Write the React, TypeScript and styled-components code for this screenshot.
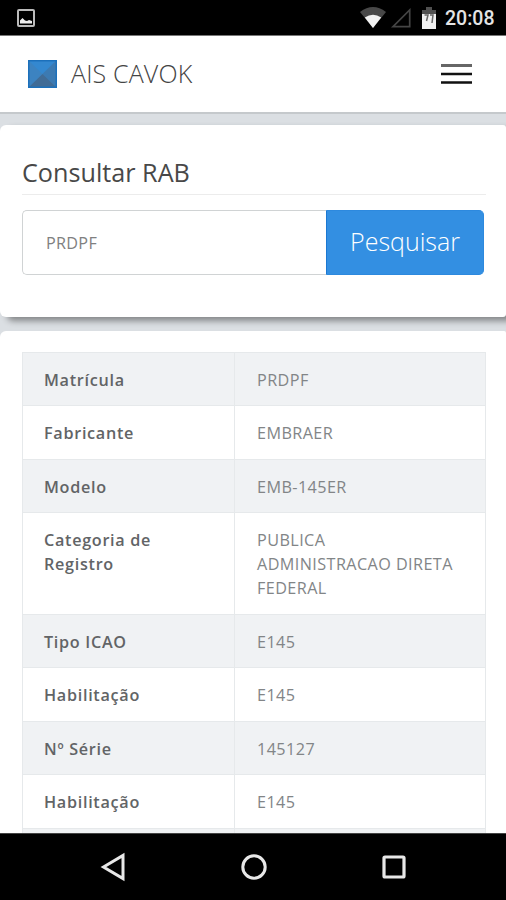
import React from "react";
import styled, { createGlobalStyle } from "styled-components";

const GlobalStyle = createGlobalStyle`
  * { box-sizing: border-box; }
  body {
    margin: 0;
    background: #dbdfe3;
    font-family: "Open Sans", "Noto Sans", sans-serif;
    overflow: hidden;
  }
`;

const Screen = styled.div`
  width: 506px;
  height: 900px;
  display: flex;
  flex-direction: column;
  background: #dbdfe3;
  overflow: hidden;
`;

const StatusBar = styled.header`
  flex: none;
  height: 35px;
  display: flex;
  align-items: center;
  justify-content: space-between;
  padding: 0 11px 0 17px;
  background: #000;
`;

const StatusIcons = styled.div`
  display: flex;
  align-items: center;
  svg { display: block; }
`;

const Clock = styled.span`
  width: 50px;
  margin-left: 9px;
  padding-top: 3px;
  color: #e4e4e4;
  font: 500 19.5px/24px Roboto, sans-serif;
  white-space: nowrap;
`;

const TopBar = styled.div`
  flex: none;
  height: 79px;
  display: flex;
  align-items: center;
  padding: 0 34px 1px 28px;
  background: #fff;
  border-top: 1px solid #777;
  border-bottom: 2px solid #c5c9cc;
`;

const BrandName = styled.h1`
  flex: 1;
  margin: -2px 0 0 14px;
  font-size: 25px;
  line-height: 34px;
  font-weight: 300;
  letter-spacing: 0.15px;
  color: #444;
`;

const MenuButton = styled.button`
  width: 31px;
  height: 22px;
  padding: 0;
  border: 0;
  background: none;
  svg { display: block; }
`;

const Content = styled.main`
  flex: 1;
  min-height: 0;
  display: flex;
  flex-direction: column;
  gap: 14px;
  padding-top: 11px;
  overflow: hidden;
`;

const SearchCard = styled.section`
  flex: none;
  height: 192px;
  padding: 29px 20px 0 22px;
  background: #fff;
  border-radius: 6px 3px 3px 6px;
  box-shadow: 7px 4px 6px #858789;
`;

const CardTitle = styled.h2`
  margin: 0;
  height: 41px;
  font-size: 25.2px;
  line-height: 36px;
  font-weight: 400;
  color: #484848;
  border-bottom: 1px solid #ececec;
`;

const SearchForm = styled.form`
  display: flex;
  height: 65px;
  margin-top: 15px;
  padding-right: 2px;
`;

const SearchInput = styled.input`
  flex: 1;
  min-width: 0;
  padding: 0 23px;
  border: 1px solid #d0d3d4;
  border-right: 0;
  border-radius: 5px 0 0 5px;
  outline: 0;
  background: #fff;
  color: #808080;
  font: 400 16.2px "Open Sans", sans-serif;
  letter-spacing: 0.3px;
`;

const SearchButton = styled.button`
  width: 158px;
  padding: 0 0 3px;
  border: 1px solid #2d89de;
  border-left-color: #1c78d2;
  border-radius: 0 5px 5px 0;
  background: #338fe2;
  color: #fff;
  font: 300 25px "Open Sans", sans-serif;
`;

const ResultCard = styled.section`
  flex: 1;
  min-height: 0;
  padding: 21px 20px 0 22px;
  background: #fff;
  border-radius: 6px 2px 0 0;
  overflow: hidden;
`;

const DataTable = styled.table`
  width: 464px;
  border-collapse: collapse;
  table-layout: fixed;
  font-size: 16.2px;
  line-height: 24.2px;
`;

const Row = styled.tr<{ $striped: boolean; $height: number }>`
  height: ${(p) => p.$height}px;
  background: ${(p) => (p.$striped ? "#f0f2f4" : "#fff")};
`;

const Label = styled.th`
  width: 212px;
  padding: 14.5px 22px 12px 21px;
  border: 1px solid #e6e9eb;
  text-align: left;
  vertical-align: top;
  font-weight: 600;
  letter-spacing: 0.7px;
  color: #626466;
`;

const Value = styled.td`
  padding: 14.5px 22px 12px 22px;
  border: 1px solid #e6e9eb;
  vertical-align: top;
  letter-spacing: 0.42px;
  white-space: pre-line;
  color: #828587;
`;

const NavBar = styled.nav`
  flex: none;
  height: 67px;
  display: flex;
  justify-content: center;
  align-items: center;
  gap: 112px;
  padding-left: 1px;
  background: #000;
  border-top: 1px solid #444;
  svg { display: block; }
`;

const rows = [
  { label: "Matrícula", value: "PRDPF", height: 53 },
  { label: "Fabricante", value: "EMBRAER", height: 54 },
  { label: "Modelo", value: "EMB-145ER", height: 53 },
  { label: "Categoria de Registro", value: "PUBLICA\nADMINISTRACAO DIRETA\nFEDERAL", height: 102 },
  { label: "Tipo ICAO", value: "E145", height: 53 },
  { label: "Habilitação", value: "E145", height: 54 },
  { label: "Nº Série", value: "145127", height: 53 },
  { label: "Habilitação", value: "E145", height: 54 },
  { label: "", value: "", height: 53 },
];

const PictureIcon = () => (
  <svg width="18" height="18" viewBox="0 0 18 18">
    <rect x="1" y="1" width="16" height="16" rx="1" fill="none" stroke="#bbb" strokeWidth="2" />
    <path d="M3 14.5V11.5L5.5 9L8 11.5L10 12L12 11L15 12V14.5Z" fill="#eee" />
  </svg>
);

const WifiIcon = () => (
  <svg width="26" height="21" viewBox="0 0 26 21">
    <path d="M0 5Q13 -5 26 5L13 21Z" fill="#484848" />
    <path d="M4.8 10.5Q13 5 21.2 10.5L13 21Z" fill="#f2f2f2" />
  </svg>
);

const SignalIcon = () => (
  <svg width="36" height="20" viewBox="0 0 36 20">
    <path d="M7 18.7H23.7V2Z" fill="none" stroke="#454545" strokeWidth="1.7" />
  </svg>
);

const BatteryIcon = () => (
  <svg width="14" height="22" viewBox="0 0 14 22">
    <path d="M0 3H4V0H10V3H14V8H0Z" fill="#505050" />
    <path d="M0 7H14V22H0Z" fill="#f0f0f0" />
    <path d="M2.5 8H6L4.5 14M8 8H11L10 16" fill="none" stroke="#666" strokeWidth="1.5" />
  </svg>
);

const BrandLogo = () => (
  <svg width="29" height="28" viewBox="0 0 29 28">
    <rect width="29" height="28" fill="#3c83c1" />
    <path d="M0 0H29L14.5 14Z" fill="#3488d0" />
    <path d="M29 0L14.5 14L29 28Z" fill="#3c7ab2" />
    <path d="M0 28L14.5 14L29 28Z" fill="#416c96" />
    <rect x=".75" y=".75" width="27.5" height="26.5" fill="none" stroke="#1c70bb" strokeWidth="1.5" />
  </svg>
);

export default function App() {
  return (
    <Screen>
      <GlobalStyle />
      <StatusBar>
        <PictureIcon />
        <StatusIcons>
          <WifiIcon />
          <SignalIcon />
          <BatteryIcon />
          <Clock>20:08</Clock>
        </StatusIcons>
      </StatusBar>
      <TopBar>
        <BrandLogo />
        <BrandName>AIS CAVOK</BrandName>
        <MenuButton aria-label="Menu">
          <svg width="31" height="22" viewBox="0 0 31 22">
            <path d="M0 2.5H31" stroke="#666" strokeWidth="3" />
            <path d="M0 11H31M0 19.5H31" stroke="#111" strokeWidth="2.5" />
          </svg>
        </MenuButton>
      </TopBar>
      <Content>
        <SearchCard>
          <CardTitle>Consultar RAB</CardTitle>
          <SearchForm>
            <SearchInput defaultValue="PRDPF" />
            <SearchButton type="button">Pesquisar</SearchButton>
          </SearchForm>
        </SearchCard>
        <ResultCard>
          <DataTable>
            <tbody>
              {rows.map((row, i) => (
                <Row key={i} $striped={i % 2 === 0} $height={row.height}>
                  <Label>{row.label}</Label>
                  <Value>{row.value}</Value>
                </Row>
              ))}
            </tbody>
          </DataTable>
        </ResultCard>
      </Content>
      <NavBar>
        <svg width="28" height="30" viewBox="0 0 28 30">
          <path d="M3.5 15L23 3.5V26.5Z" fill="none" stroke="#e8e8e8" strokeWidth="3" />
        </svg>
        <svg width="28" height="30" viewBox="0 0 28 30">
          <circle cx="14" cy="15" r="11.2" fill="none" stroke="#e8e8e8" strokeWidth="3" />
        </svg>
        <svg width="28" height="30" viewBox="0 0 28 30">
          <rect x="4" y="5" width="20" height="20" rx="1" fill="none" stroke="#e8e8e8" strokeWidth="3.2" />
        </svg>
      </NavBar>
    </Screen>
  );
}
